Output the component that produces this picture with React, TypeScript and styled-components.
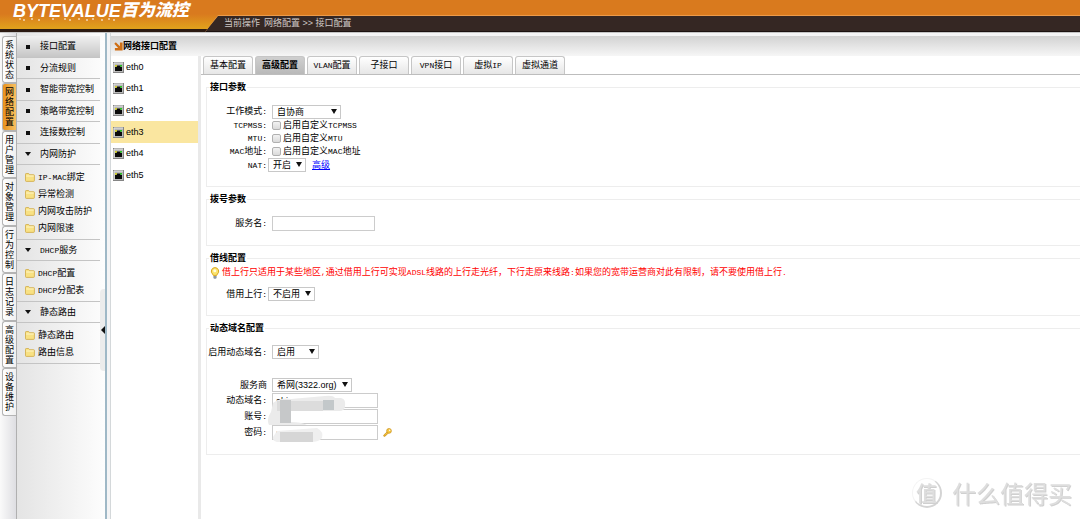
import React, { useState } from "react";
import styled, { createGlobalStyle, css } from "styled-components";

const GlobalStyle = createGlobalStyle`
  * { box-sizing: border-box; }
  html, body { margin: 0; padding: 0; }
  body {
    background: #fff;
    color: #000;
    font: 9px/13px "Liberation Sans", "Noto Sans CJK SC", sans-serif;
  }
  button, input, select { font: inherit; color: inherit; margin: 0; }
`;

const Page = styled.div`
  min-height: 100vh;
  display: flex;
  flex-direction: column;
`;

/* ---------- header ---------- */

const Header = styled.header`
  height: 32px;
  display: flex;
  align-items: flex-end;
  background: linear-gradient(#d97a1e 0 14px, #e0a01c 28px, #e0a01c 29px, #2b1a12 29px);
`;

const Brand = styled.a`
  position: relative;
  align-self: flex-start;
  flex: 0 0 205px;
  padding-left: 13px;
  display: flex;
  align-items: center;
  color: #fff;
  font-style: italic;
  font-weight: 700;
  line-height: 22px;
  text-decoration: none;
  white-space: nowrap;
`;

const BrandLatin = styled.span`
  font-size: 18px;
`;

const BrandCjk = styled.span`
  font-size: 17px;
  font-weight: 900;
`;

const BrandMarks = styled.svg`
  position: absolute;
  left: 18px;
  top: 18px;
`;

const CrumbEdge = styled.div`
  flex: 1;
  height: 17px;
  padding-top: 1px;
  background: #ec9a4a;
  clip-path: polygon(13px 0, 100% 0, 100% 100%, 0 100%);
`;

const Crumbs = styled.nav`
  height: 16px;
  padding-left: 19px;
  display: flex;
  align-items: center;
  gap: 4px;
  color: #cfc8c5;
  background: #352723;
  border-bottom: 1px solid #1c1210;
  clip-path: polygon(13px 0, 100% 0, 100% 100%, 0 100%);
`;

/* ---------- frame ---------- */

const Body = styled.div`
  flex: 1;
  display: flex;
  background: #f4f4f5;
  border-top: 1px solid #c4c4c4;
`;

const ModuleRail = styled.nav`
  flex: 0 0 16px;
  padding: 3px 0 0 2px;
  display: grid;
  align-content: start;
  grid-auto-rows: 47px 48px;
  background: linear-gradient(90deg, #fafafa, #dedee2);
`;

const ModuleTab = styled.button<{ $active?: boolean }>`
  padding: 0 2px;
  border: 1px solid #b4b4b4;
  border-right: 0;
  border-radius: 3px 0 0 3px;
  background: ${(p) =>
    p.$active
      ? "linear-gradient(90deg, #e8921c, #f6c063)"
      : "linear-gradient(90deg, #fff, #f0f0f0)"};
  line-height: 10px;
  white-space: normal;
  word-break: break-all;
`;

const Sidebar = styled.aside`
  position: relative;
  flex: 0 0 91px;
  padding-top: 3px;
  border-left: 1px solid #b0b0b0;
  border-right: 2px solid #9fb8c6;
  background: linear-gradient(90deg, #e4e4e4, #fdfdfd);
`;

const MenuList = styled.div`
  display: grid;
  grid-auto-rows: 22px 21px;
  margin-right: 5px;
`;

const MenuItem = styled.button<{ $active?: boolean }>`
  height: 100%;
  min-height: 21px;
  width: 100%;
  padding: 0 0 0 8px;
  display: flex;
  align-items: center;
  gap: 9px;
  border: 0;
  border-bottom: 1px solid #c4c4c4;
  background: ${(p) => (p.$active ? "linear-gradient(#f0f0f0, #c6c6c6)" : "none")};
  text-align: left;
  white-space: nowrap;
`;

const Marker = styled.svg`
  flex: 0 0 6px;
`;

const SubMenu = styled.div`
  margin-right: 5px;
  padding: 4px 0 2px 8px;
  border-bottom: 1px solid #c4c4c4;
`;

const GroupBox = styled.div`
  margin-right: 5px;
`;

const SubItem = styled.a`
  height: 17px;
  display: flex;
  align-items: center;
  gap: 3px;
  color: inherit;
  text-decoration: none;
  white-space: nowrap;
`;

const CollapseHandle = styled.button`
  position: absolute;
  right: 0;
  top: 256px;
  width: 5px;
  height: 82px;
  padding: 0;
  border: 0;
  border-radius: 4px 0 0 4px;
  background: #ececec;
  display: flex;
  align-items: center;
  justify-content: flex-end;
`;

const Main = styled.main`
  flex: 1;
  min-width: 0;
  margin-left: 3px;
  padding-top: 3px;
  display: flex;
  flex-direction: column;
  border-left: 1px solid #d4d8da;
`;

const TitleBar = styled.h1`
  height: 20px;
  margin: 0;
  padding-left: 3px;
  display: flex;
  align-items: center;
  background: linear-gradient(#d2d2d2, #f6f6f6);
  font-size: 9px;
  font-weight: 700;
`;

const Columns = styled.div`
  flex: 1;
  display: flex;
  background: #fff;
`;

const PortList = styled.div`
  flex: 0 0 90px;
  display: grid;
  align-content: start;
  grid-auto-rows: 22px 21px 22px;
  border-right: 3px solid #e9e9e9;
`;

const PortItem = styled.button<{ $active?: boolean }>`
  padding: 0 0 0 2px;
  display: flex;
  align-items: center;
  gap: 2px;
  border: 0;
  background: ${(p) => (p.$active ? "#fae6a0" : "#fff")};
`;

const Content = styled.section`
  flex: 1;
  min-width: 0;
`;

const Tabs = styled.div`
  height: 19px;
  padding: 0 2px;
  display: flex;
  align-items: flex-end;
  gap: 2px;
  border-bottom: 1px solid #bdbdbd;
`;

const Tab = styled.button<{ $active?: boolean }>`
  width: 50px;
  height: 18px;
  padding: 0;
  border: 1px solid #c6c6c6;
  border-bottom: 0;
  border-radius: 3px 3px 0 0;
  white-space: nowrap;
  background: linear-gradient(#fff, #e6e6e6);
  ${(p) =>
    p.$active &&
    css`
      font-weight: 700;
      background: linear-gradient(#cfcfcf, #b9b9b9);
    `}
`;

/* ---------- form ---------- */

const Form = styled.form`
  padding: 6px 0 20px 5px;
  display: flex;
  flex-direction: column;
  gap: 6px;
`;

const Section = styled.fieldset<{ $top: number; $bottom: number }>`
  min-width: 0;
  margin: 0;
  padding: ${(p) => p.$top}px 0 ${(p) => p.$bottom}px 0;
  border: 1px solid #ededed;
  border-right: 0;
`;

const Legend = styled.legend`
  margin-left: 2px;
  padding: 0 1px;
  line-height: 12px;
  font-weight: 700;
`;

const Row = styled.div<{ $h: number; $tight?: boolean }>`
  height: ${(p) => p.$h}px;
  display: flex;
  align-items: center;
  gap: ${(p) => (p.$tight ? 1 : 5)}px;
`;

const Label = styled.label`
  flex: 0 0 60px;
  display: flex;
  justify-content: flex-end;
  white-space: nowrap;
`;

const Latin = styled.span`
  font-family: "Liberation Mono", monospace;
  font-size: 8px;
`;

const SelectBox = styled.span<{ $w: number }>`
  position: relative;
  width: ${(p) => p.$w}px;
  height: 14px;
`;

const Select = styled.select`
  appearance: none;
  display: block;
  width: 100%;
  height: 100%;
  padding: 0 0 0 4px;
  border: 1px solid #c8c8c8;
  border-radius: 0;
  background: #fff;
  line-height: 12px;
`;

const Caret = styled.svg`
  position: absolute;
  right: 4px;
  top: 4px;
  pointer-events: none;
`;

const Field = styled.input<{ $w: number }>`
  width: ${(p) => p.$w}px;
  height: 15px;
  padding: 0 3px;
  border: 1px solid #ccc;
  background: #fff;
`;

const Check = styled.input`
  appearance: none;
  width: 9px;
  height: 9px;
  border: 1px solid #b0b0b0;
  border-radius: 2px;
  background: linear-gradient(#f2f2f2, #dadada);
  &:checked { background: #777; }
`;

const CheckLabel = styled.label`
  display: flex;
  align-items: center;
  gap: 2px;
  white-space: nowrap;
`;

const MoreLink = styled.a`
  margin-left: 5px;
  color: #00f;
  text-decoration: underline;
`;

const Note = styled.p`
  height: 13px;
  margin: 0 0 8px;
  padding-left: 3px;
  display: flex;
  align-items: center;
  gap: 2px;
  color: #f00;
`;

const Spacer = styled.div`
  height: 19px;
`;

const Account = styled.div`
  position: relative;
  display: flex;
  flex-direction: column;
  gap: 1px;
`;

const Smudge = styled.svg`
  position: absolute;
  left: 60px;
  top: 16px;
  pointer-events: none;
`;

const Watermark = styled.div`
  position: fixed;
  right: 8px;
  bottom: 9px;
  display: flex;
  align-items: center;
  gap: 10px;
  color: #dedede;
  font: 24px/34px "Noto Sans CJK SC", sans-serif;
  pointer-events: none;
  text-shadow: 1px 1px 0 #d0d0d0;
`;

const Seal = styled.span`
  width: 30px;
  height: 30px;
  border: 1px solid #f4f4f4;
  border-right: 2px solid #d4d4d4;
  border-bottom: 2px solid #d4d4d4;
  border-radius: 50%;
  font-size: 21px;
  font-weight: 500;
  line-height: 26px;
  text-align: center;
`;

/* ---------- icons ---------- */

const FolderIcon = () => (
  <svg width="10" height="9" viewBox="0 0 10 9" aria-hidden="true">
    <path d="M.5 1.2Q.5.5 1.2.5H3.6L4.6 1.7H8.6Q9.4 1.7 9.4 2.4V7.6Q9.4 8.4 8.6 8.4H1.3Q.5 8.4.5 7.6Z" fill="#f8e183" stroke="#cfaa45" strokeWidth=".8" />
    <path d="M1.2 3H8.8" stroke="#fff8cf" strokeWidth=".9" />
  </svg>
);

const PortIcon = () => (
  <svg width="11" height="11" viewBox="0 0 11 11" aria-hidden="true">
    <rect x=".5" y=".5" width="10" height="10" fill="#b9b9b9" stroke="#858585" />
    <path d="M1 10V1H10" fill="none" stroke="#e6e6e6" />
    <path d="M2 9V5H3.5V3.5H7.5V5H9V9Z" fill="#0b0b0b" />
    <rect x="2" y="3" width="2" height="1.6" fill="#d5d21d" />
    <rect x="7" y="3" width="2" height="1.6" fill="#25c31f" />
  </svg>
);

const TitleIcon = () => (
  <svg width="9" height="9" viewBox="0 0 9 9" aria-hidden="true">
    <path d="M.3 1.8 1.8.3 5.9 4.2V.6H8.6V8.6H.9V6H4.1Z" fill="#cf6f16" />
  </svg>
);

const BulbIcon = () => (
  <svg width="10" height="12" viewBox="0 0 10 12" aria-hidden="true">
    <path d="M5 .6A3.7 3.7 0 0 0 2.6 7.1L3.3 8.4H6.7L7.4 7.1A3.7 3.7 0 0 0 5 .6Z" fill="#fbe36a" stroke="#d9a520" />
    <circle cx="4.8" cy="3.8" r="1.5" fill="#fffbe0" />
    <path d="M3.4 9H6.6V11L5.8 11.8H4.2L3.4 11Z" fill="#8d97a3" />
  </svg>
);

const KeyIcon = () => (
  <svg width="9" height="9" viewBox="0 0 9 9" aria-hidden="true">
    <path d="M4.6 3.4.7 7.1.9 8.3H2.1V7.5H3V6.7H3.8L5.4 5.1" fill="#f3c23a" stroke="#c98f1b" strokeWidth=".7" />
    <circle cx="6" cy="2.9" r="2.4" fill="#f6c843" stroke="#c98f1b" strokeWidth=".7" />
    <circle cx="6.7" cy="2.2" r=".7" fill="#fff" />
  </svg>
);

const Square = () => (
  <Marker width="6" height="6" viewBox="0 0 6 6" aria-hidden="true">
    <rect x="1" y="1" width="4" height="4" fill="#111" />
  </Marker>
);

const Down = () => (
  <Marker width="6" height="6" viewBox="0 0 6 6" aria-hidden="true">
    <path d="M0 1H6L3 5Z" fill="#111" />
  </Marker>
);

/* Sets ASCII runs in a narrow monospace beside the Chinese characters. */
const Mixed = ({ children }: { children: string }) => (
  <span>
    {children
      .split(/([\x21-\x7e]+)/)
      .filter(Boolean)
      .map((part, i) =>
        /^[\x21-\x7e]+$/.test(part) ? <Latin key={i}>{part}</Latin> : part
      )}
  </span>
);

const DropDown = ({ id, width, options }: { id: string; width: number; options: string[] }) => (
  <SelectBox $w={width}>
    <Select id={id}>
      {options.map((o) => (
        <option key={o}>{o}</option>
      ))}
    </Select>
    <Caret width="6" height="5" viewBox="0 0 6 5" aria-hidden="true">
      <path d="M0 0H6L3 5Z" fill="#111" />
    </Caret>
  </SelectBox>
);

const modules = ["系统状态", "网络配置", "用户管理", "对象管理", "行为控制", "日志记录", "高级配置", "设备维护"];
const menu = ["接口配置", "分流规则", "智能带宽控制", "策略带宽控制", "连接数控制"];
const groups = [
  { title: "内网防护", items: ["IP-MAC绑定", "异常检测", "内网攻击防护", "内网限速"] },
  { title: "DHCP服务", items: ["DHCP配置", "DHCP分配表"] },
  { title: "静态路由", items: ["静态路由", "路由信息"] },
];
const ports = ["eth0", "eth1", "eth2", "eth3", "eth4", "eth5"];
const tabs = ["基本配置", "高级配置", "VLAN配置", "子接口", "VPN接口", "虚拟IP", "虚拟通道"];
const checks = [
  { id: "tcpmss", label: "TCPMSS:", text: "启用自定义TCPMSS" },
  { id: "mtu", label: "MTU:", text: "启用自定义MTU" },
  { id: "mac", label: "MAC地址:", text: "启用自定义MAC地址" },
];

export default function App() {
  const [port, setPort] = useState("eth3");
  const [tab, setTab] = useState("高级配置");

  return (
    <Page>
      <GlobalStyle />
      <Header>
        <Brand href="#">
          <BrandLatin>BYTEVALUE</BrandLatin>
          <BrandCjk>百为流控</BrandCjk>
          <BrandMarks width="100" height="3" viewBox="0 0 100 3" aria-hidden="true">
            <path d="M1 1H3M5 2H7M13 1H15M20 2H22M34 1H36M46 1H48M51 2H53M60 1H62M68 2H70M74 1H76M83 2H85M90 1H92M95 2H97" stroke="#fff" />
          </BrandMarks>
        </Brand>
        <CrumbEdge>
          <Crumbs>
            <span>当前操作</span>
            <span>网络配置 &gt;&gt; 接口配置</span>
          </Crumbs>
        </CrumbEdge>
      </Header>

      <Body>
        <ModuleRail>
          {modules.map((m) => (
            <ModuleTab key={m} type="button" $active={m === "网络配置"}>
              {m}
            </ModuleTab>
          ))}
        </ModuleRail>

        <Sidebar>
          <MenuList>
            {menu.map((m) => (
              <MenuItem key={m} type="button" $active={m === "接口配置"}>
                <Square />
                {m}
              </MenuItem>
            ))}
          </MenuList>
          {groups.map((g) => (
            <React.Fragment key={g.title}>
              <GroupBox>
                <MenuItem type="button">
                  <Down />
                  <Mixed>{g.title}</Mixed>
                </MenuItem>
              </GroupBox>
              <SubMenu>
                {g.items.map((t) => (
                  <SubItem key={t} href="#">
                    <FolderIcon />
                    <Mixed>{t}</Mixed>
                  </SubItem>
                ))}
              </SubMenu>
            </React.Fragment>
          ))}
          <CollapseHandle type="button" aria-label="收起">
            <svg width="4" height="8" viewBox="0 0 4 8" aria-hidden="true">
              <path d="M4 0V8L0 4Z" fill="#111" />
            </svg>
          </CollapseHandle>
        </Sidebar>

        <Main>
          <TitleBar>
            <TitleIcon />
            网络接口配置
          </TitleBar>
          <Columns>
            <PortList>
              {ports.map((p) => (
                <PortItem key={p} type="button" $active={p === port} onClick={() => setPort(p)}>
                  <PortIcon />
                  {p}
                </PortItem>
              ))}
            </PortList>

            <Content>
              <Tabs role="tablist">
                {tabs.map((t) => (
                  <Tab key={t} type="button" role="tab" aria-selected={t === tab} $active={t === tab} onClick={() => setTab(t)}>
                    <Mixed>{t}</Mixed>
                  </Tab>
                ))}
              </Tabs>

              <Form>
                <Section $top={11} $bottom={14}>
                  <Legend>接口参数</Legend>
                  <Row $h={15}>
                    <Label htmlFor="mode"><Mixed>工作模式:</Mixed></Label>
                    <DropDown id="mode" width={69} options={["自协商"]} />
                  </Row>
                  {checks.map((c) => (
                    <Row key={c.id} $h={13}>
                      <Label htmlFor={c.id}><Mixed>{c.label}</Mixed></Label>
                      <CheckLabel>
                        <Check type="checkbox" id={c.id} />
                        <Mixed>{c.text}</Mixed>
                      </CheckLabel>
                    </Row>
                  ))}
                  <Row $h={14} $tight>
                    <Label htmlFor="nat"><Mixed>NAT:</Mixed></Label>
                    <DropDown id="nat" width={38} options={["开启", "关闭"]} />
                    <MoreLink href="#">高级</MoreLink>
                  </Row>
                </Section>

                <Section $top={11} $bottom={14}>
                  <Legend>拨号参数</Legend>
                  <Row $h={15}>
                    <Label htmlFor="service"><Mixed>服务名:</Mixed></Label>
                    <Field id="service" $w={103} />
                  </Row>
                </Section>

                <Section $top={2} $bottom={14}>
                  <Legend>借线配置</Legend>
                  <Note>
                    <BulbIcon />
                    <Mixed>借上行只适用于某些地区,通过借用上行可实现ADSL线路的上行走光纤，下行走原来线路:如果您的宽带运营商对此有限制，请不要使用借上行.</Mixed>
                  </Note>
                  <Row $h={14} $tight>
                    <Label htmlFor="uplink"><Mixed>借用上行:</Mixed></Label>
                    <DropDown id="uplink" width={47} options={["不启用", "启用"]} />
                  </Row>
                </Section>

                <Section $top={11} $bottom={14}>
                  <Legend>动态域名配置</Legend>
                  <Row $h={14}>
                    <Label htmlFor="ddns"><Mixed>启用动态域名:</Mixed></Label>
                    <DropDown id="ddns" width={47} options={["启用", "不启用"]} />
                  </Row>
                  <Spacer />
                  <Account>
                    <Row $h={14}>
                      <Label htmlFor="provider">服务商</Label>
                      <DropDown id="provider" width={80} options={["希网(3322.org)"]} />
                    </Row>
                    <Row $h={15}>
                      <Label htmlFor="domain"><Mixed>动态域名:</Mixed></Label>
                      <Field id="domain" $w={106} defaultValue="abi" />
                    </Row>
                    <Row $h={15}>
                      <Label htmlFor="account"><Mixed>账号:</Mixed></Label>
                      <Field id="account" $w={106} />
                    </Row>
                    <Row $h={15}>
                      <Label htmlFor="password"><Mixed>密码:</Mixed></Label>
                      <Field id="password" type="password" $w={106} defaultValue="a" />
                      <KeyIcon />
                    </Row>
                    <Smudge width="82" height="50" viewBox="0 0 82 50" aria-hidden="true">
                      <path d="M6 9Q14 3 24 5L58 2Q66 1 68 4H74Q79 5 78 12Q78 17 72 17H24V28Q34 28 40 31H2Q-1 25 4 18Z" fill="#ebebeb" />
                      <rect x="10" y="7" width="46" height="10" fill="#dcdcdc" />
                      <rect x="13" y="6" width="11" height="23" fill="#c6c8c9" />
                      <rect x="56" y="6" width="11" height="10" fill="#c3c8ca" />
                      <path d="M10 37 50 34Q57 38 55 44Q52 48 44 48H10Q5 47 6 43Z" fill="#efefef" />
                      <rect x="13" y="38" width="33" height="10" fill="#d6d6d6" />
                    </Smudge>
                  </Account>
                </Section>
              </Form>
            </Content>
          </Columns>
        </Main>
      </Body>

      <Watermark>
        <Seal>值</Seal>
        <span>什么值得买</span>
      </Watermark>
    </Page>
  );
}
